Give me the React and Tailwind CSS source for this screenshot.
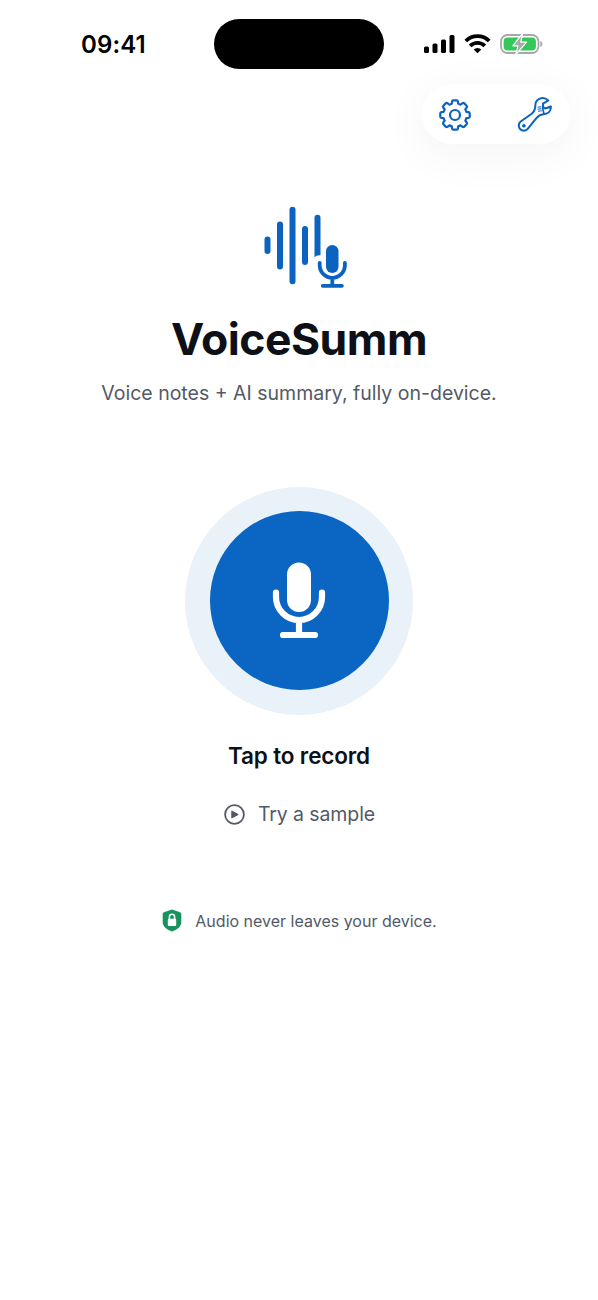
function StatusBar() {
  return (
    <div className="flex h-[69px] items-end pr-[55px] pl-[81px]">
      <span className="mb-[7px] w-[133px] text-[24px] leading-[34px] font-semibold tracking-[0.1px] text-black">
        09:41
      </span>

      <div className="h-[50px] w-[170px] rounded-full bg-black" />

      <div className="mb-[15px] ml-auto flex w-[119px] items-center gap-[9px]">
        <svg width="31" height="20" viewBox="0 0 31 20" className="shrink-0">
          <rect x="0" y="12.5" width="5" height="6.500" rx="1.5" />
          <rect x="8.5" y="9.5" width="5" height="9.500" rx="1.5" />
          <rect x="17" y="5.5" width="5" height="13.500" rx="1.5" />
          <rect x="25.5" y="1" width="5" height="18" rx="1.5" />
        </svg>

        <svg
          width="27"
          height="20"
          viewBox="0 0 27 20"
          fill="none"
          stroke="#000"
          strokeWidth="3.8"
          className="shrink-0"
        >
          <path d="M1.8 7a16.6 16.6 0 0 1 23.4 0" />
          <path d="M6.2 11.8a10.4 10.4 0 0 1 14.6 0" />
          <path
            d="M13.5 19.2 9.7 15.5a5.4 5.4 0 0 1 7.6 0z"
            fill="#000"
            stroke="none"
          />
        </svg>

        <svg width="43" height="20" viewBox="0 0 43 20" className="shrink-0">
          <rect
            x="1"
            y="1"
            width="37.5"
            height="18"
            rx="6.5"
            fill="none"
            stroke="#a8a8ab"
            strokeWidth="1.8"
          />
          <rect x="3.6" y="3.6" width="32.3" height="12.8" rx="4" fill="#34c759" />
          <path d="M40.3 7v6c2.8-.9 2.8-5.1 0-6z" fill="#a8a8ab" />
          <path
            d="M22.500-.5 12.800 11.800H18L15.800 20.500 26.600 8.200H20.800z"
            fill="#a8a8ab"
            stroke="#fff"
            strokeWidth="1.2"
            strokeLinejoin="round"
          />
        </svg>
      </div>
    </div>
  );
}

function GearIcon() {
  return (
    <svg
      width="32"
      height="32"
      viewBox="-16 -16 32 32"
      fill="none"
      stroke="#0b63bf"
      strokeWidth="2.2"
      strokeLinejoin="round"
    >
      <circle r="5" />
      <path d="M-1.7-14.7H1.7Q2.7-14.7 2.9-13.5L3.2-11.3Q4.3-11 5.5-10.3L7.6-11.8Q8.5-12.4 9.3-11.6L11.6-9.3Q12.4-8.5 11.8-7.6L10.3-5.5Q11-4.3 11.3-3.2L13.5-2.9Q14.7-2.7 14.7-1.7V1.7Q14.7 2.7 13.5 2.9L11.3 3.2Q11 4.3 10.3 5.5L11.8 7.6Q12.4 8.5 11.6 9.3L9.3 11.6Q8.5 12.4 7.6 11.8L5.5 10.3Q4.3 11 3.2 11.3L2.9 13.5Q2.7 14.7 1.7 14.7H-1.7Q-2.7 14.7-2.9 13.5L-3.2 11.3Q-4.3 11-5.5 10.3L-7.6 11.8Q-8.5 12.4-9.3 11.6L-11.6 9.3Q-12.4 8.5-11.8 7.6L-10.3 5.5Q-11 4.3-11.3 3.2L-13.5 2.9Q-14.7 2.7-14.7 1.7V-1.7Q-14.7-2.7-13.5-2.9L-11.3-3.2Q-11-4.3-10.3-5.5L-11.8-7.6Q-12.4-8.5-11.6-9.3L-9.3-11.6Q-8.5-12.4-7.6-11.8L-5.5-10.3Q-4.3-11-3.2-11.3L-2.9-13.5Q-2.7-14.7-1.7-14.7Z" />
    </svg>
  );
}

function WrenchIcon() {
  return (
    <svg
      width="36"
      height="36"
      viewBox="0 0 36 36"
      fill="none"
      stroke="#0b63bf"
      strokeWidth="2"
      strokeLinejoin="round"
      strokeLinecap="round"
      className="-mt-px"
    >
      <path d="M31.3 4.5C26-.3 18.3 2.7 18.3 9.8c0 4-.8 5.7-3.6 8L3.4 25.8a5.1 5.1 0 1 0 7.3 7.1L19.2 22.4c2-2.6 3.8-3.9 7.2-4.2 4.5-.3 7.7-3.2 7.5-7.7l-5.7 2-2-1.3-.2-3.5z" />
      <path d="M26 7.7c-.5 3.7-.3 7 1 10.3" strokeWidth="1.7" />
      <circle cx="6.8" cy="29.8" r="1.5" fill="#0b63bf" strokeWidth=".6" />
      <path d="m20.9 11.2 3.2-.4M21 13.2l3.2-.4M21.4 15.2l3-.4" strokeWidth="1" />
    </svg>
  );
}

function Toolbar() {
  return (
    <div className="mt-[15px] mr-[28px] flex h-[60px] w-[148px] items-center justify-between self-end rounded-full bg-white pt-px pr-[17px] pl-[17px] shadow-[0_10px_44px_6px_rgba(0,0,0,0.04)]">
      <button type="button" aria-label="Settings">
        <GearIcon />
      </button>
      <button type="button" aria-label="Tools">
        <WrenchIcon />
      </button>
    </div>
  );
}

function WaveLogo() {
  return (
    <svg
      width="84"
      height="82"
      viewBox="0 0 84 82"
      fill="#0b63bf"
      className="mt-[62px] ml-[14px]"
    >
      <rect x=".5" y="30.5" width="6" height="17.5" rx="3" />
      <rect x="13" y="15.5" width="6" height="48" rx="3" />
      <rect x="25.5" y=".7" width="6" height="77.6" rx="3" />
      <rect x="38" y="20" width="6" height="39" rx="3" />
      <path d="M50.5 11.8a3 3 0 0 1 6 0v37.5c-2.8-.2-4.7.6-6 2.3z" />
      <rect x="62" y="39" width="12.5" height="28" rx="6.25" />
      <path
        d="M55.7 56.8v2.4a12.6 12.6 0 0 0 25.2 0v-2.4M68.3 72v7.8M58.7 79.8h19.2"
        fill="none"
        stroke="#0b63bf"
        strokeWidth="3.8"
        strokeLinecap="round"
      />
    </svg>
  );
}

function RecordButton() {
  return (
    <button
      type="button"
      aria-label="Record"
      className="mt-[79.5px] flex size-[228px] items-center justify-center rounded-full bg-[#e9f1f9]"
    >
      <span className="flex size-[179px] items-center justify-center rounded-full bg-[#0b65c2]">
        <svg width="54" height="77" viewBox="0 0 54 77" fill="#fff">
          <rect x="15" y=".5" width="24" height="49.5" rx="12" />
          <path
            d="M4 30.5V35a23 23 0 0 0 46 0v-4.5M27 59v14M11 73h32"
            fill="none"
            stroke="#fff"
            strokeWidth="6.2"
            strokeLinecap="round"
          />
        </svg>
      </span>
    </button>
  );
}

export default function App() {
  return (
    <div className="flex h-[1300px] w-[598px] flex-col items-center overflow-hidden bg-white font-['Inter',sans-serif]">
      <div className="flex w-full flex-col">
        <StatusBar />
        <Toolbar />
      </div>

      <WaveLogo />

      <h1 className="mt-[23px] text-[44.5px] leading-[56px] font-bold tracking-[-0.5px] text-[#0d1117]">
        VoiceSumm
      </h1>
      <p className="mt-[12px] text-[19.5px] leading-[28px] whitespace-nowrap text-[#525967]">
        Voice notes + AI summary, fully on-device.
      </p>

      <RecordButton />

      <p className="mt-[25.5px] text-[22.5px] leading-[32px] font-semibold tracking-[-0.15px] text-[#0d1117]">
        Tap to record
      </p>

      <button
        type="button"
        className="mt-[29px] flex items-center gap-[13px] pl-px text-[19.5px] leading-[26px] tracking-[-0.1px] text-[#525967]"
      >
        <svg width="21" height="21" viewBox="0 0 21 21">
          <circle
            cx="10.5"
            cy="10.5"
            r="9.4"
            fill="none"
            stroke="currentColor"
            strokeWidth="1.8"
          />
          <path
            d="M7.8 7v7l6.4-3.5z"
            fill="currentColor"
            stroke="currentColor"
            strokeLinejoin="round"
          />
        </svg>
        <span className="whitespace-nowrap">Try a sample</span>
      </button>

      {/* Privacy note */}
      <div className="mt-[82px] flex items-center gap-[13px] pl-px">
        <svg width="20" height="23" viewBox="0 0 20 23">
          <path
            d="M10 .4 18 3.3q1.3.5 1.3 1.8v8.2c0 4.6-4.5 7.3-9.3 9.3C5.2 20.6.7 17.9.7 13.3V5.1Q.7 3.8 2 3.3z"
            fill="#16935c"
          />
          <rect x="5.8" y="9.8" width="8.4" height="7.2" rx="1.2" fill="#fff" />
          <path
            d="M7.4 10V7.8a2.6 2.6 0 0 1 5.2 0V10"
            fill="none"
            stroke="#fff"
            strokeWidth="1.5"
          />
        </svg>
        <span className="text-[16px] leading-[22px] whitespace-nowrap text-[#525967]">
          Audio never leaves your device.
        </span>
      </div>
    </div>
  );
}
